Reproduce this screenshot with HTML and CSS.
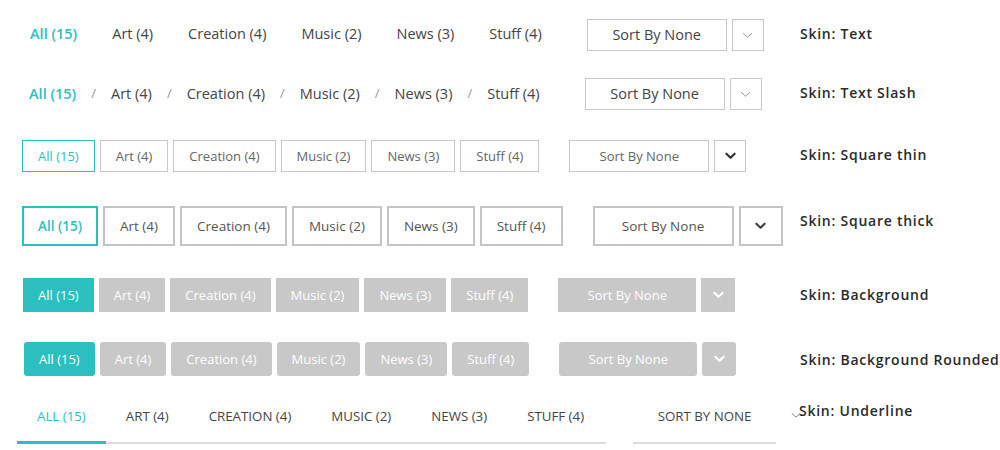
FILE: index.html
```html
<!DOCTYPE html>
<html lang="en">
<head>
<meta charset="utf-8">
<title>Filter skins</title>
<link rel="stylesheet" href="styles.css">
</head>
<body>
<main class="demos">

  <section class="demo demo--text">
    <div class="bar">
      <ul class="filters">
        <li class="filter is-active">All (15)</li>
        <li class="filter">Art (4)</li>
        <li class="filter">Creation (4)</li>
        <li class="filter">Music (2)</li>
        <li class="filter">News (3)</li>
        <li class="filter">Stuff (4)</li>
      </ul>
      <div class="sort">
        <div class="sort-label">Sort By None</div>
        <div class="sort-toggle"><svg class="chev chev--thin" viewBox="0 0 12 8"><path d="M1 1.5 L6 6 L11 1.5"/></svg></div>
      </div>
    </div>
    <h2 class="skin">Skin: Text</h2>
  </section>

  <section class="demo demo--slash">
    <div class="bar">
      <ul class="filters">
        <li class="filter is-active">All (15)</li>
        <li class="sep">/</li>
        <li class="filter">Art (4)</li>
        <li class="sep">/</li>
        <li class="filter">Creation (4)</li>
        <li class="sep">/</li>
        <li class="filter">Music (2)</li>
        <li class="sep">/</li>
        <li class="filter">News (3)</li>
        <li class="sep">/</li>
        <li class="filter">Stuff (4)</li>
      </ul>
      <div class="sort">
        <div class="sort-label">Sort By None</div>
        <div class="sort-toggle"><svg class="chev chev--thin" viewBox="0 0 12 8"><path d="M1 1.5 L6 6 L11 1.5"/></svg></div>
      </div>
    </div>
    <h2 class="skin">Skin: Text Slash</h2>
  </section>

  <section class="demo demo--thin">
    <div class="bar">
      <ul class="filters">
        <li class="filter is-active">All (15)</li>
        <li class="filter">Art (4)</li>
        <li class="filter">Creation (4)</li>
        <li class="filter">Music (2)</li>
        <li class="filter">News (3)</li>
        <li class="filter">Stuff (4)</li>
      </ul>
      <div class="sort">
        <div class="sort-label">Sort By None</div>
        <div class="sort-toggle"><svg class="chev chev--bold" viewBox="0 0 12 8"><path d="M1.5 1.5 L6 6 L10.5 1.5"/></svg></div>
      </div>
    </div>
    <h2 class="skin">Skin: Square thin</h2>
  </section>

  <section class="demo demo--thick">
    <div class="bar">
      <ul class="filters">
        <li class="filter is-active">All (15)</li>
        <li class="filter">Art (4)</li>
        <li class="filter">Creation (4)</li>
        <li class="filter">Music (2)</li>
        <li class="filter">News (3)</li>
        <li class="filter">Stuff (4)</li>
      </ul>
      <div class="sort">
        <div class="sort-label">Sort By None</div>
        <div class="sort-toggle"><svg class="chev chev--bold" viewBox="0 0 12 8"><path d="M1.5 1.5 L6 6 L10.5 1.5"/></svg></div>
      </div>
    </div>
    <h2 class="skin">Skin: Square thick</h2>
  </section>

  <section class="demo demo--bg">
    <div class="bar">
      <ul class="filters">
        <li class="filter is-active">All (15)</li>
        <li class="filter">Art (4)</li>
        <li class="filter">Creation (4)</li>
        <li class="filter">Music (2)</li>
        <li class="filter">News (3)</li>
        <li class="filter">Stuff (4)</li>
      </ul>
      <div class="sort">
        <div class="sort-label">Sort By None</div>
        <div class="sort-toggle"><svg class="chev chev--bold" viewBox="0 0 12 8"><path d="M1.5 1.5 L6 6 L10.5 1.5"/></svg></div>
      </div>
    </div>
    <h2 class="skin">Skin: Background</h2>
  </section>

  <section class="demo demo--bg demo--rounded">
    <div class="bar">
      <ul class="filters">
        <li class="filter is-active">All (15)</li>
        <li class="filter">Art (4)</li>
        <li class="filter">Creation (4)</li>
        <li class="filter">Music (2)</li>
        <li class="filter">News (3)</li>
        <li class="filter">Stuff (4)</li>
      </ul>
      <div class="sort">
        <div class="sort-label">Sort By None</div>
        <div class="sort-toggle"><svg class="chev chev--bold" viewBox="0 0 12 8"><path d="M1.5 1.5 L6 6 L10.5 1.5"/></svg></div>
      </div>
    </div>
    <h2 class="skin">Skin: Background Rounded</h2>
  </section>

  <section class="demo demo--underline">
    <div class="bar">
      <ul class="filters">
        <li class="filter is-active">All (15)</li>
        <li class="filter">Art (4)</li>
        <li class="filter">Creation (4)</li>
        <li class="filter">Music (2)</li>
        <li class="filter">News (3)</li>
        <li class="filter">Stuff (4)</li>
      </ul>
      <div class="sort">
        <div class="sort-label">Sort By None</div>
        <div class="sort-toggle"><svg class="chev chev--thin" viewBox="0 0 12 8"><path d="M1 1.5 L6 6 L11 1.5"/></svg></div>
      </div>
    </div>
    <h2 class="skin">Skin: Underline</h2>
  </section>

</main>
</body>
</html>
```

FILE: styles.css
```css
* { box-sizing: border-box; }

html, body {
  margin: 0;
  padding: 0;
  background: #ffffff;
}

body {
  width: 1000px;
  height: 450px;
  overflow: hidden;
  font-family: "Open Sans", "Noto Sans", "Liberation Sans", sans-serif;
  color: #444;
}

.demos {
  display: flex;
  flex-direction: column;
}

.demo {
  display: flex;
  align-items: center;
}

.bar {
  width: 800px;
  flex: none;
  display: flex;
  align-items: center;
}

.filters {
  list-style: none;
  margin: 0;
  padding: 0;
  display: flex;
  align-items: center;
}

.filter {
  white-space: nowrap;
}

.sort {
  display: flex;
  align-items: center;
  gap: 5px;
  margin-left: 30px;
}

.sort-label {
  display: flex;
  align-items: center;
  justify-content: center;
  white-space: nowrap;
}

.sort-toggle {
  display: flex;
  align-items: center;
  justify-content: center;
}

.chev {
  display: block;
  fill: none;
  stroke: currentColor;
}

.chev--thin {
  width: 11px;
  height: 7px;
  stroke-width: 1;
  color: #888;
}

.chev--bold {
  width: 11px;
  height: 8px;
  stroke-width: 2.4;
  stroke-linecap: round;
  stroke-linejoin: round;
}

.skin {
  margin: 0;
  font-size: 14px;
  font-weight: 600;
  letter-spacing: 0.75px;
  color: #2a2a2a;
  white-space: nowrap;
}

.filter.is-active { color: #2bbfbf; }

/* ---------- Skin: Text ---------- */
.demo--text {
  margin-top: 19px;
  height: 32px;
}
.demo--text .filters { padding-left: 15px; padding-bottom: 3px; gap: 5px; }
.demo--text .filter {
  font-size: 14.5px;
  padding: 0 15px;
}
.demo--text .filter.is-active { font-weight: 600; }
.demo--text .sort-label,
.demo--slash .sort-label {
  width: 140px;
  height: 32px;
  border: 1px solid #c8c8c8;
  font-size: 14.5px;
  color: #444;
  padding-bottom: 1px;
}
.demo--text .sort-toggle,
.demo--slash .sort-toggle {
  width: 32px;
  height: 32px;
  border: 1px solid #c8c8c8;
}
.demo--text .skin,
.demo--slash .skin,
.demo--thin .skin { margin-bottom: 3px; }

/* ---------- Skin: Text Slash ---------- */
.demo--slash {
  margin-top: 27px;
  height: 32px;
}
.demo--slash .filters { padding-left: 29px; padding-bottom: 2px; }
.demo--slash .filter { font-size: 14.5px; }
.demo--slash .filter.is-active { font-weight: 600; }
.demo--slash .sep {
  font-size: 13px;
  color: #999;
  margin: 0 15px;
}
.demo--slash .sort { margin-left: 45px; }

/* ---------- Skin: Square thin ---------- */
.demo--thin {
  margin-top: 30px;
  height: 32px;
}
.demo--thin .filters { padding-left: 22px; gap: 5px; }
.demo--thin .filter {
  height: 32px;
  display: flex;
  align-items: center;
  padding: 0 15px;
  border: 1px solid #c8c8c8;
  font-size: 13px;
  color: #666;
}
.demo--thin .filter.is-active { border-color: #2bbfbf; color: #2bbfbf; }
.demo--thin .sort-label {
  width: 140px;
  height: 32px;
  border: 1px solid #c8c8c8;
  font-size: 13px;
  color: #666;
}
.demo--thin .sort-toggle {
  width: 32px;
  height: 32px;
  border: 1px solid #c8c8c8;
  color: #333;
}

/* ---------- Skin: Square thick ---------- */
.demo--thick {
  margin-top: 34px;
  height: 40px;
}
.demo--thick .filters { padding-left: 22px; gap: 5px; }
.demo--thick .filter {
  height: 40px;
  display: flex;
  align-items: center;
  padding: 0 15px;
  border: 2px solid #c4c4c4;
  font-size: 13.5px;
  color: #555;
}
.demo--thick .filter.is-active {
  border-color: #2bbfbf;
  color: #2bbfbf;
  font-weight: 600;
  padding: 0 14px;
}
.demo--thick .sort-label {
  width: 141px;
  height: 40px;
  border: 2px solid #c4c4c4;
  font-size: 13.5px;
  color: #555;
}
.demo--thick .sort-toggle {
  width: 44px;
  height: 40px;
  border: 2px solid #c4c4c4;
  color: #444;
}
.demo--thick .skin { margin-bottom: 11px; }

/* ---------- Skin: Background ---------- */
.demo--bg {
  margin-top: 32px;
  height: 34px;
}
.demo--bg .filters { padding-left: 23px; gap: 5px; }
.demo--bg .filter {
  height: 34px;
  display: flex;
  align-items: center;
  padding: 0 15px;
  background: #c8c8c8;
  font-size: 13px;
  color: #fff;
}
.demo--bg .filter.is-active { background: #2bbfbf; color: #fff; }
.demo--bg .sort-label {
  width: 138px;
  height: 34px;
  background: #c8c8c8;
  font-size: 13px;
  color: #fff;
}
.demo--bg .sort-toggle {
  width: 34px;
  height: 34px;
  background: #c8c8c8;
  color: #fff;
}
.demo--bg .skin { margin-bottom: 2px; }

/* ---------- Skin: Background Rounded ---------- */
.demo--rounded {
  margin-top: 30px;
}
.demo--rounded .filters { padding-left: 24px; }
.demo--rounded .filter,
.demo--rounded .sort-label,
.demo--rounded .sort-toggle {
  border-radius: 3px;
}
.demo--rounded .skin { margin-bottom: 0; }

/* ---------- Skin: Underline ---------- */
.demo--underline {
  margin-top: 14px;
  height: 54px;
  align-items: flex-start;
}
.demo--underline .bar { align-items: stretch; height: 54px; }
.demo--underline .filters {
  margin-left: 17px;
  padding-right: 2px;
  align-items: stretch;
  border-bottom: 2px solid #dcdcdc;
}
.demo--underline .filter {
  display: flex;
  align-items: center;
  padding: 0 20px;
  font-size: 13.3px;
  text-transform: uppercase;
  color: #444;
  border-bottom: 3px solid transparent;
  margin-bottom: -2px;
}
.demo--underline .filter.is-active {
  color: #2bbfbf;
  border-bottom-color: #2bbfbf;
}
.demo--underline .sort {
  margin-left: 27px;
  align-items: stretch;
  gap: 0;
}
.demo--underline .sort-label {
  width: 143px;
  font-size: 13.3px;
  text-transform: uppercase;
  color: #444;
  border-bottom: 2px solid #dcdcdc;
}
.demo--underline .sort-toggle {
  width: 10px;
  margin-left: 15px;
  padding-bottom: 4px;
}
.demo--underline .sort-toggle .chev { color: #666; width: 10px; }
.demo--underline .skin { margin-top: 11px; margin-left: -1px; }
```
